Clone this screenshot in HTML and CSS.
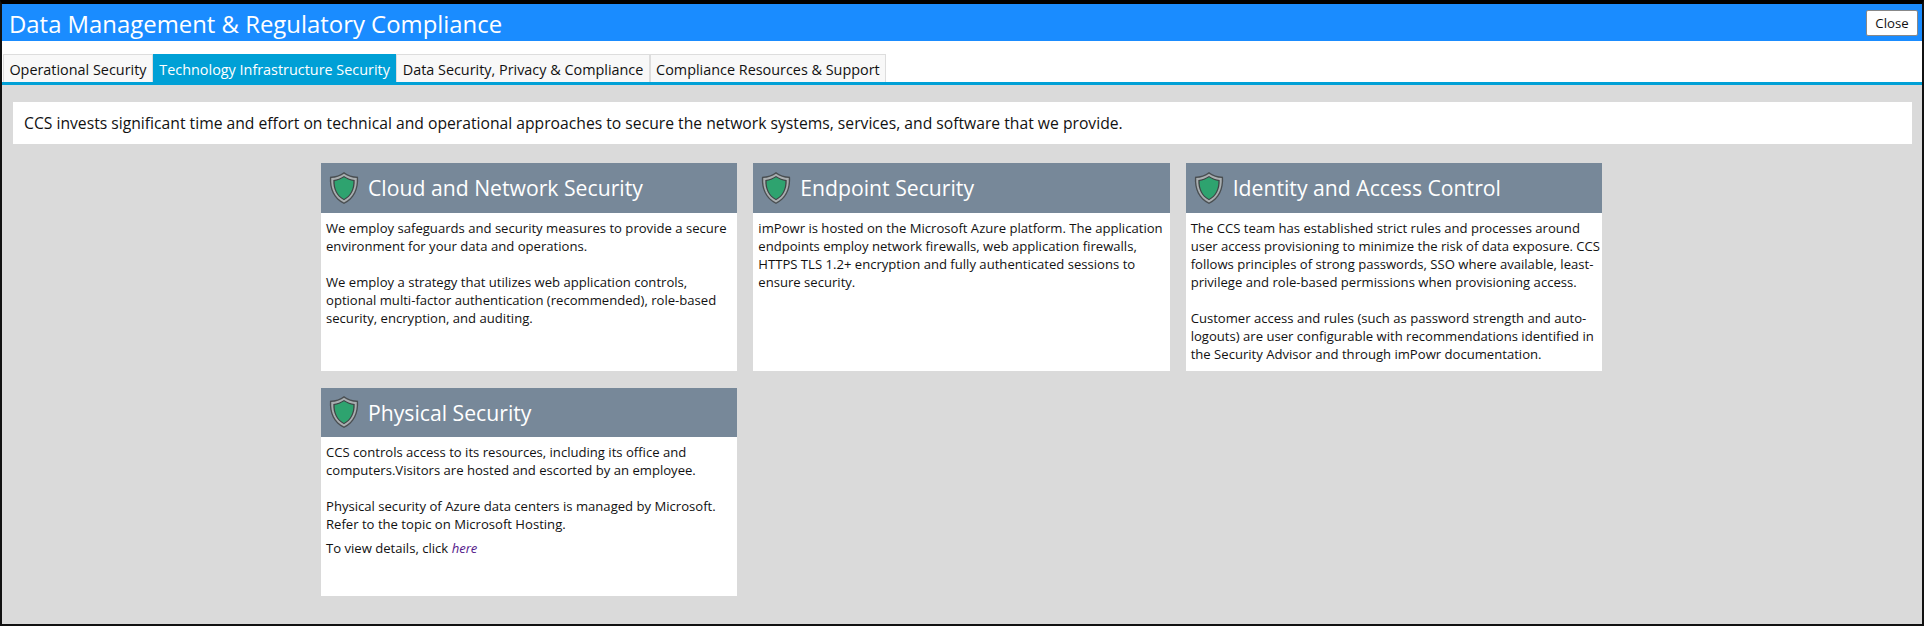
FILE: index.html
```html
<!DOCTYPE html>
<html lang="en">

<head>
  <meta charset="UTF-8">
  <title>Data Management &amp; Regulatory Compliance</title>
  <link rel="stylesheet" href="styles.css">
</head>

<body>
  <div class="window">
    <div class="title-bar">
      <h1>Data Management &amp; Regulatory Compliance</h1>
      <button class="btn-close">Close</button>
    </div>
    <div class="tabs">
      <a class="tab">Operational Security</a>
      <a class="tab active">Technology Infrastructure Security</a>
      <a class="tab">Data Security, Privacy &amp; Compliance</a>
      <a class="tab">Compliance Resources &amp; Support</a>
    </div>
    <div class="content">
      <p class="intro">CCS invests significant time and effort on technical and operational approaches to secure the network systems, services, and software that we provide.</p>
      <div class="cards">
        <div class="card">
          <div class="card-head">
            <svg class="shield" viewBox="0 0 32 36"><use href="#shield-icon"></use></svg>
            <h2>Cloud and Network Security</h2>
          </div>
          <div class="card-body">
            We employ safeguards and security measures to provide a secure environment for your data and operations.<br><br>
            We employ a strategy that utilizes web application controls, optional multi-factor authentication (recommended), role-based security, encryption, and auditing.
          </div>
        </div>
        <div class="card">
          <div class="card-head">
            <svg class="shield" viewBox="0 0 32 36"><use href="#shield-icon"></use></svg>
            <h2>Endpoint Security</h2>
          </div>
          <div class="card-body">
            imPowr is hosted on the Microsoft Azure platform. The application endpoints employ network firewalls, web application firewalls, HTTPS TLS 1.2+ encryption and fully authenticated sessions to ensure security.
          </div>
        </div>
        <div class="card">
          <div class="card-head">
            <svg class="shield" viewBox="0 0 32 36"><use href="#shield-icon"></use></svg>
            <h2>Identity and Access Control</h2>
          </div>
          <div class="card-body">
            The CCS team has established strict rules and processes around user access provisioning to minimize the risk of data exposure. CCS follows principles of strong passwords, SSO where available, least-privilege and role-based permissions when provisioning access.<br><br>
            Customer access and rules (such as password strength and auto-logouts) are user configurable with recommendations identified in the Security Advisor and through imPowr documentation.
          </div>
        </div>
        <div class="card">
          <div class="card-head">
            <svg class="shield" viewBox="0 0 32 36"><use href="#shield-icon"></use></svg>
            <h2>Physical Security</h2>
          </div>
          <div class="card-body">
            CCS controls access to its resources, including its office and computers.Visitors are hosted and escorted by an employee.<br><br>
            Physical security of Azure data centers is managed by Microsoft. Refer to the topic on Microsoft Hosting.
            <p class="details">To view details, click <a class="details-link">here</a></p>
          </div>
        </div>
      </div>
    </div>
  </div>
  <svg class="icon-defs" aria-hidden="true">
    <symbol id="shield-icon" viewBox="0 0 32 36">
      <path d="M16 1 C20 4 25 6 31 6 C32 19 27 30 16 35 C5 30 0 19 1 6 C7 6 12 4 16 1 Z" fill="#4a4f52"></path>
      <path d="M16 2.8 C20 5.6 24.6 7.2 29.6 7.4 C30.2 19 26 28.6 16 33.4 C6 28.6 1.8 19 2.4 7.4 C7.4 7.2 12 5.6 16 2.8 Z" fill="#a9aeb0"></path>
      <path d="M16 5.2 C19.6 7.6 23.4 9 27.4 9.4 C27.8 19 24 26.8 16 31 C8 26.8 4.2 19 4.6 9.4 C8.6 9 12.4 7.6 16 5.2 Z" fill="#3f4446"></path>
      <path d="M16 6.6 C19.4 8.8 22.8 10 26 10.4 C26.2 19 22.8 26 16 29.6 C9.2 26 5.8 19 6 10.4 C9.2 10 12.6 8.8 16 6.6 Z" fill="#2ea36f"></path>
    </symbol>
  </svg>
</body>

</html>
```

FILE: styles.css
```css
* {
  box-sizing: border-box;
  padding: 0;
  margin: 0;
}

html,
body {
  width: 100%;
  height: 100%;
}

body {
  font-family: "Open Sans", "Noto Sans", sans-serif;
  color: #111;
  overflow: hidden;
}

.icon-defs {
  display: none;
}

.window {
  height: 626px;
  display: flex;
  flex-direction: column;
  border: 2px solid #111;
  border-top: 4px solid #000;
  background-color: #fff;
}

.title-bar {
  height: 37px;
  padding: 5px 4px 0 7px;
  display: flex;
  justify-content: space-between;
  align-items: flex-start;
  background-color: #1a8cff;
}

.title-bar h1 {
  font-size: 23.9px;
  line-height: 30px;
  font-weight: 400;
  color: #fff;
}

.btn-close {
  width: 52px;
  height: 26px;
  margin-top: 1px;
  font-family: inherit;
  font-size: 13.2px;
  color: #111;
  background-color: #fff;
  border: 1px solid #888;
  border-radius: 2px;
}

.tabs {
  height: 44px;
  padding: 13px 0 0 1px;
  display: flex;
  border-bottom: 3px solid #00a0d6;
}

.tab {
  height: 28px;
  padding: 0 5.4px;
  font-size: 14.4px;
  line-height: 30px;
  color: #111;
  background-color: #f8f8f8;
  border: 1px solid #ddd;
  border-bottom: 0;
}

.tab.active {
  color: #fff;
  background-color: #00a0d6;
  border-color: #00a0d6;
}

.content {
  flex: 1;
  padding: 17px 10px 0 11px;
  background-color: #dadada;
}

.intro {
  height: 42px;
  padding: 0 11px;
  font-size: 15.7px;
  line-height: 42px;
  background-color: #fff;
}

.cards {
  width: 1281px;
  margin: 19px 0 0 308px;
  display: grid;
  grid-template-columns: repeat(3, 416.33px);
  grid-auto-rows: 208px;
  gap: 16.6px 16px;
}

.card {
  display: flex;
  flex-direction: column;
  background-color: #fff;
}

.card-head {
  height: 49.8px;
  padding-left: 8px;
  display: flex;
  flex-shrink: 0;
  align-items: center;
  background-color: #778899;
}

.shield {
  width: 30px;
  height: 34px;
  flex-shrink: 0;
}

.card-head h2 {
  margin-left: 9px;
  font-size: 21.2px;
  font-weight: 400;
  color: #fff;
}

.card-body {
  padding: 6px 0 6px 5px;
  font-size: 13.1px;
  line-height: 18px;
}

.details {
  margin-top: 6px;
}

.details-link {
  font-style: italic;
  color: #551a8b;
}
```
